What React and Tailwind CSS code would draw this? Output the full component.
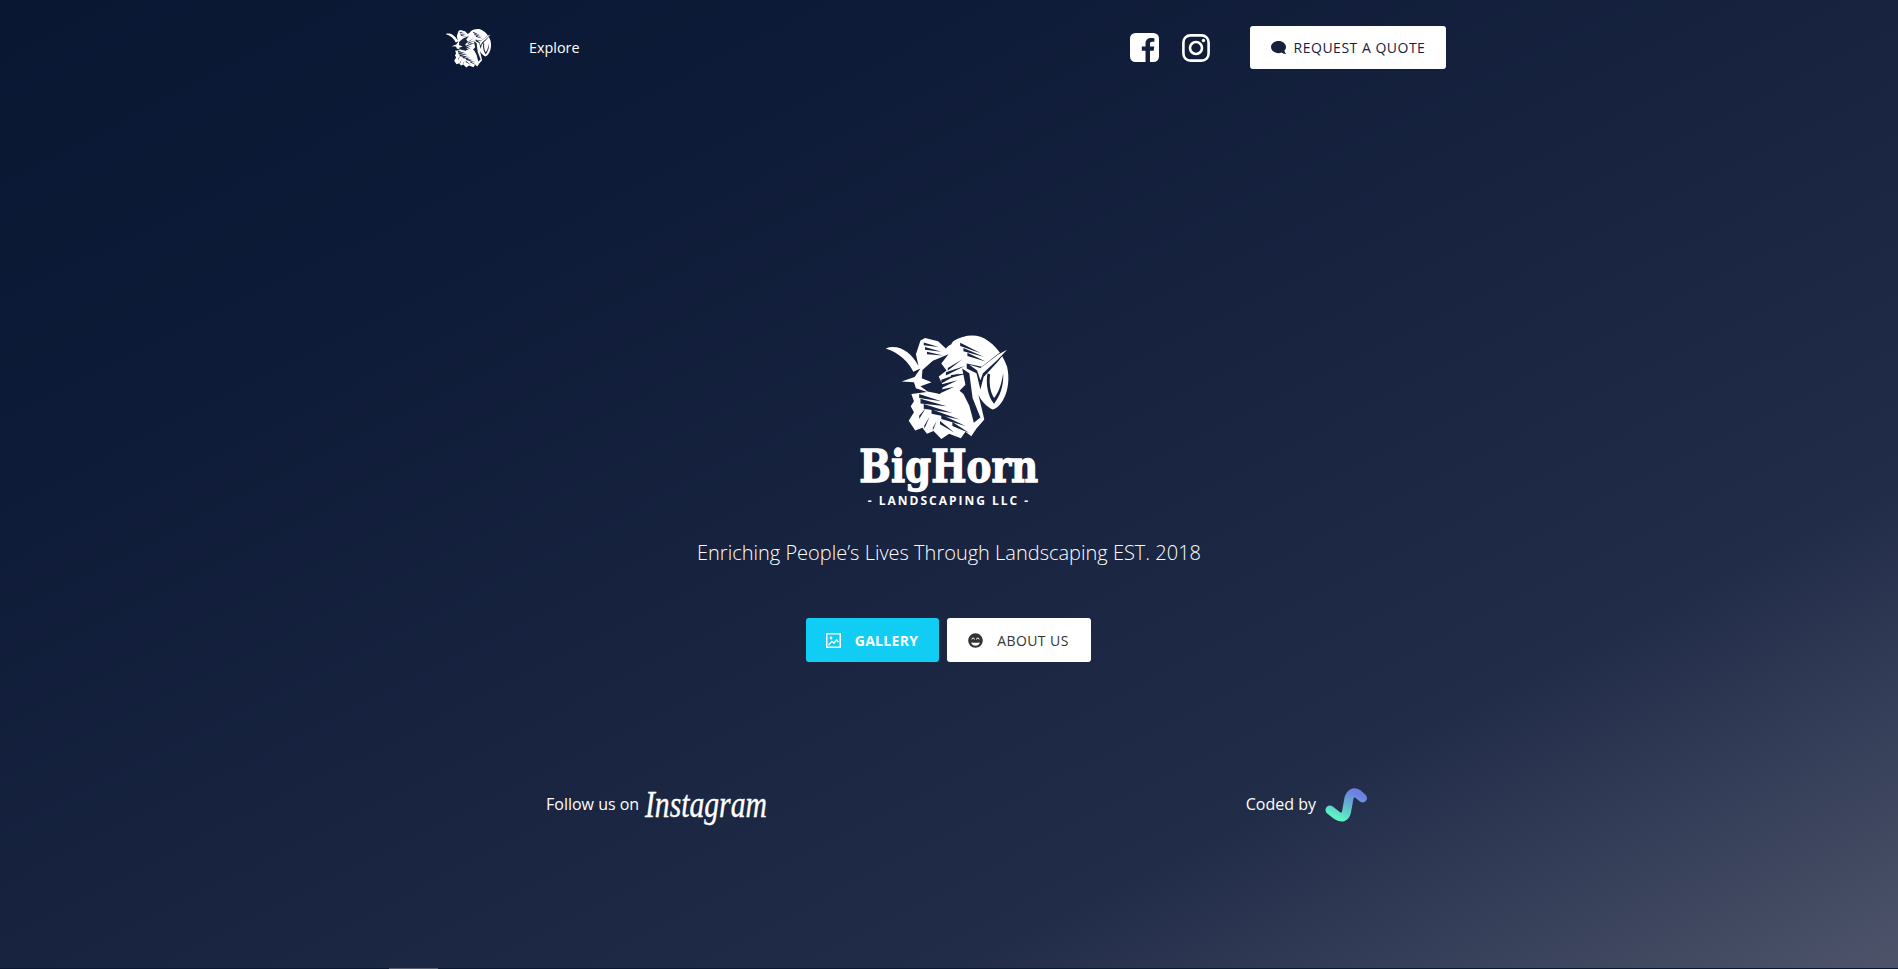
import React from "react";
import { FaComment, FaGrinBeam } from "react-icons/fa";

const wedges = [
  [122, 60, 168, 70, 4],
  [126, 74, 176, 84, 4],
  [132, 88, 182, 96, 4],
  [234, 62, 296, 88, 5],
  [244, 78, 306, 100, 5],
  [256, 92, 312, 114, 5],
  [196, 138, 240, 108, 4],
  [190, 152, 248, 128, 5],
  [206, 160, 258, 150, 4],
  [176, 176, 232, 150, 6],
  [172, 192, 226, 172, 6],
  [168, 208, 216, 192, 6],
  [108, 220, 176, 236, 6],
  [112, 236, 192, 252, 7],
  [122, 252, 210, 272, 7],
  [146, 268, 232, 292, 7],
  [176, 284, 250, 312, 7],
  [210, 306, 262, 334, 6],
  [108, 286, 128, 258, 5],
  [124, 316, 140, 284, 5],
  [150, 322, 162, 296, 4],
  [172, 302, 216, 332, 5],
];

function Ram({ className }) {
  const dark = "#16223f";
  return (
    <svg viewBox="0 30 390 322" className={className} aria-hidden="true">
      <path
        fill="#fff"
        d="M5 74 C44 60 82 84 106 128 L98 92 L112 50 L126 42 L166 52 L190 74 L212 52 C240 34 272 30 296 38 C330 50 364 88 378 130 C386 165 382 200 368 228 C358 248 346 258 334 262 C316 252 300 238 290 216 L308 292 L284 320 L268 344 L250 330 L236 350 L200 336 L176 352 L152 328 L132 336 L118 318 L96 326 L76 296 L92 270 L82 252 L92 236 L84 214 L132 208 L98 196 L92 178 L54 176 L94 162 L112 136 L90 146 C78 118 46 86 5 74 Z"
      />
      <path
        fill={dark}
        d="M118 140 L150 112 L198 92 L176 120 L192 142 L168 160 L182 190 L172 214 L134 206 L112 190 L146 178 L116 166 Z"
      />
      {wedges.map(([a, b, c, d, w], i) => (
        <polygon key={i} fill={dark} points={`${a},${b - w} ${a},${b + w} ${c},${d}`} />
      ))}
      <path fill={dark} d="M240 136 L262 150 L272 226 L296 286 L276 302 L262 250 L244 214 L232 204 L250 186 Z" />
      <path fill={dark} d="M318 150 C312 180 318 220 338 244 C356 220 368 190 366 150 C360 190 350 212 338 226 C326 208 322 180 326 154 Z" />
      <path fill={dark} d="M254 120 L300 130 L352 90 L384 72 L350 114 L306 162 L296 200 L284 150 L254 136 Z" />
      <path fill="#fff" d="M262 124 L296 134 L352 92 L378 78 L348 110 L304 150 L296 172 L286 142 Z" />
      <path fill={dark} d="M176 46 L196 60 L216 44 L206 62 L188 70 Z" />
    </svg>
  );
}

function FacebookTile({ className }) {
  return (
    <svg viewBox="0 0 29 29" className={className} aria-hidden="true">
      <rect width="29" height="29" rx="5.5" fill="#fff" />
      <path
        fill="#14203c"
        d="M20 29 V17.8 h3.7 l.6-4.2 H20 v-2.7 c0-1.2.5-2.1 2.2-2.1 H24.4 V5.2 c-.4 0-1.8-.2-3.3-.2 -3.3 0-5.6 2-5.6 5.6 v3 h-3.7 v4.2 h3.7 V29 z"
      />
    </svg>
  );
}

function InstagramOutline({ className }) {
  return (
    <svg viewBox="0 0 28 28" className={className} fill="none" stroke="#fff" aria-hidden="true">
      <rect x="1.4" y="1.4" width="25.2" height="25.2" rx="7" strokeWidth="2.6" />
      <circle cx="14" cy="14" r="6" strokeWidth="2.6" />
      <circle cx="21.5" cy="6.5" r="1.7" fill="#fff" stroke="none" />
    </svg>
  );
}

function PictureIcon({ className }) {
  return (
    <svg viewBox="0 0 15 15" className={className} aria-hidden="true">
      <rect x="0.75" y="0.75" width="13.5" height="13.5" fill="none" stroke="#fff" strokeWidth="1.5" />
      <circle cx="5" cy="5" r="1.4" fill="#fff" />
      <path d="M2.5 12 L6 8.5 L8 10 L10.5 7 L12.5 9" fill="none" stroke="#fff" strokeWidth="1.4" />
    </svg>
  );
}

function CoderMark({ className }) {
  return (
    <svg viewBox="0 0 42 37" className={className} aria-hidden="true">
      <defs>
        <linearGradient id="coderS" x1="0.2" y1="1" x2="0.75" y2="0">
          <stop offset="0" stopColor="#5ff2c4" />
          <stop offset="0.5" stopColor="#62b9d0" />
          <stop offset="1" stopColor="#6e80e2" />
        </linearGradient>
      </defs>
      <path
        d="M5 24 L12 29.5 Q19.5 34 21.5 26 L24 12 Q27 4 33 8 L37.5 12"
        fill="none"
        stroke="url(#coderS)"
        strokeWidth="9"
        strokeLinecap="round"
        strokeLinejoin="round"
      />
    </svg>
  );
}

export default function App() {
  return (
    <div className="h-[969px] flex flex-col overflow-hidden text-white font-['Open_Sans',sans-serif] bg-[linear-gradient(to_bottom_right,#091733_0%,#0e1b38_25%,#17233f_50%,#212c49_75%,#4d546a_100%)]">
      <header className="flex items-center pl-[445px] pr-[452px] pt-[26px]">
        <Ram className="w-[47px] h-[40px]" />
        <a className="ml-[37px] text-[14.4px] leading-[20px]">Explore</a>
        <div className="ml-auto flex items-center">
          <FacebookTile className="w-[29px] h-[29px]" />
          <InstagramOutline className="ml-[23px] w-[28px] h-[28px]" />
          <button className="ml-[40px] w-[196px] h-[43px] bg-white rounded-[3px] flex items-center justify-center gap-[8px] text-[#16213e] text-[14px] tracking-[0.5px]">
            <FaComment className="w-[15px] h-[15px] -scale-x-100" />
            REQUEST A QUOTE
          </button>
        </div>
      </header>

      <main className="flex flex-col items-center pt-[264px]">
        <Ram className="ml-[-4px] w-[127px] h-[107px]" />
        <div className="mt-[2px] h-[50px] text-[45px] leading-[50px] font-bold scale-x-[0.83] font-['DejaVu_Serif',serif] [-webkit-text-stroke:1.3px_white]">
          BigHorn
        </div>
        <div className="mt-[1px] text-[12px] leading-[16px] font-bold tracking-[2px]">- LANDSCAPING LLC -</div>
        <p className="mt-[30px] text-[20px] leading-[27px] font-light">
          Enriching People’s Lives Through Landscaping EST. 2018
        </p>
        <div className="mt-[52px] ml-[-2px] flex gap-[8px]">
          <button className="w-[133px] h-[44px] bg-[#12cdf3] rounded-[3px] flex items-center justify-center gap-[14px] text-[14px] font-bold tracking-[0.3px]">
            <PictureIcon className="w-[15px] h-[15px]" />
            GALLERY
          </button>
          <button className="w-[144px] h-[44px] bg-white rounded-[3px] flex items-center justify-center gap-[14px] text-[14px] font-medium text-[#333] tracking-[0.4px]">
            <FaGrinBeam className="w-[15px] h-[15px]" />
            ABOUT US
          </button>
        </div>
      </main>

      <footer className="mt-[122px] flex items-center justify-between pl-[546px] pr-[531px]">
        <div className="flex items-center gap-[6px]">
          <span className="text-[16px] leading-[22px]">Follow us on</span>
          <span className="text-[38px] leading-[40px] font-['Liberation_Serif',serif] italic origin-left scale-x-[0.78] [-webkit-text-stroke:0.4px_white]">
            Instagram
          </span>
        </div>
        <div className="flex items-center gap-[9px]">
          <span className="text-[16px] leading-[22px]">Coded by</span>
          <CoderMark className="w-[42px] h-[37px]" />
        </div>
      </footer>

      <div className="mt-auto h-px bg-[#0a1730] pl-[389px]">
        <div className="h-px w-[49px] bg-[#555b6e]" />
      </div>
    </div>
  );
}
